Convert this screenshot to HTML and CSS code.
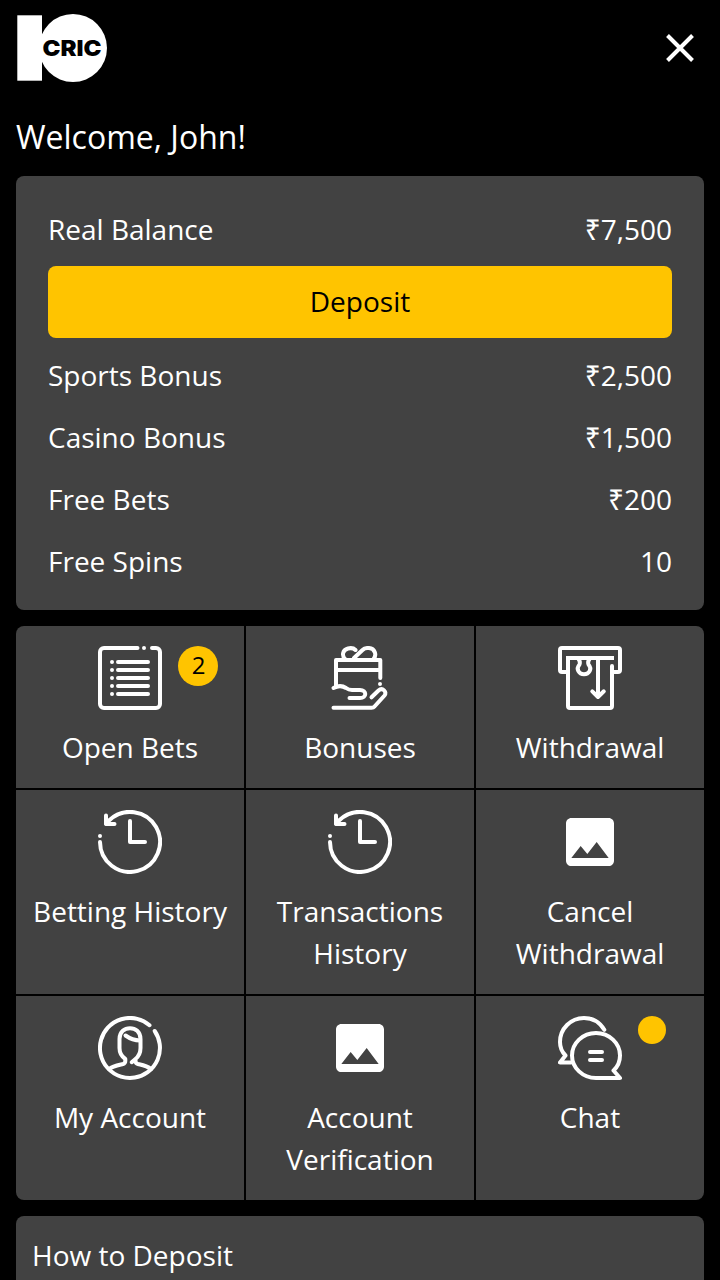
FILE: index.html
```html
<!DOCTYPE html>
<html lang="en">
<head>
    <meta charset="UTF-8">
    <meta name="viewport" content="width=device-width, initial-scale=1.0">
    <title>My Account</title>
    <link rel="stylesheet" href="styles.css">
</head>
<body>
    <!-- shared icons -->
    <svg class="sprite" width="0" height="0">
        <symbol id="icon-history" viewBox="0 0 64 64">
            <path d="M2 32A30 30 0 1 0 11 10.5L8 14M8 5.5V14H16.5M32 11V32H47"/>
            <path d="M2 26V26"/>
        </symbol>
        <symbol id="icon-image" viewBox="0 0 24 24">
            <path class="solid" d="M21 19V5c0-1.1-.9-2-2-2H5c-1.1 0-2 .9-2 2v14c0 1.1.9 2 2 2h14c1.1 0 2-.9 2-2zM8.5 13.5l2.5 3.01L14.5 12l4.5 6H5l3.5-4.5z"/>
        </symbol>
    </svg>

    <header class="header">
        <a href="#" class="logo">
            <svg width="92" height="70" viewBox="0 0 92 70">
                <rect x="1.3" y="2.3" width="24.7" height="65.4" fill="#fff"/>
                <circle cx="57" cy="35" r="34" fill="#fff"/>
                <text x="26.5" y="43" textLength="59" lengthAdjust="spacingAndGlyphs">CRIC</text>
            </svg>
        </a>
        <button class="close" aria-label="Close">
            <svg width="32" height="32" viewBox="0 0 32 32"><path d="M3.500 3.500L28.500 28.500M28.500 3.500L3.500 28.500"/></svg>
        </button>
    </header>

    <h1 class="welcome">Welcome, John!</h1>

    <section class="card balance">
        <div class="row"><span>Real Balance</span><span>₹7,500</span></div>
        <button class="deposit">Deposit</button>
        <div class="row"><span>Sports Bonus</span><span>₹2,500</span></div>
        <div class="row"><span>Casino Bonus</span><span>₹1,500</span></div>
        <div class="row"><span>Free Bets</span><span>₹200</span></div>
        <div class="row"><span>Free Spins</span><span>10</span></div>
    </section>

    <nav class="menu">
        <a href="#" class="tile">
            <svg class="icon" viewBox="0 0 64 64">
                <path d="M39.5 2H6a4 4 0 0 0-4 4V58a4 4 0 0 0 4 4H58a4 4 0 0 0 4-4V6a4 4 0 0 0-4-4H54M46 2V2"/>
                <path d="M14 16V16M20 16H50M14 24V24M20 24H50M14 32V32M20 32H50M14 40V40M20 40H50M14 48V48M20 48H50"/>
            </svg>
            <span>Open Bets</span>
            <span class="badge">2</span>
        </a>
        <a href="#" class="tile">
            <svg class="icon" viewBox="0 0 64 64">
                <path d="M8 40V14H52.3V32M8 24H52M52 38V38"/>
                <path d="M27.5 4C25 1.500 22 2 20 2.500C14 4 14 10 17 13M26 12L34.500 4C37 1.500 39 2 41 2C47 2.500 49 9 45.500 13"/>
                <path d="M5.500 42C10 39.500 15 40 18 42C20 43.500 21.500 44 24 44H32C39 44 39 52 32 52H21.500"/>
                <path d="M43.500 51.300L50.500 44.500C54.500 41 59.500 46 56.500 49.500L46.500 60.500Q45.500 61.800 43.500 61.800H5.500"/>
            </svg>
            <span>Bonuses</span>
        </a>
        <a href="#" class="tile">
            <svg class="icon" viewBox="0 0 64 64">
                <path d="M10 26H4a2 2 0 0 1-2-2V4a2 2 0 0 1 2-2H60a2 2 0 0 1 2 2V24a2 2 0 0 1-2 2H54"/>
                <path class="square" d="M8 12H56"/>
                <path d="M10 12V60a2 2 0 0 0 2 2H52a2 2 0 0 0 2-2V20M40 13V51M34.300 45.300L40 51L45.800 45.300"/>
                <path d="M20.500 13C22 15 22.500 16 21.500 18.500C17.500 23 21 28.300 26 28.300S34.500 23 30.500 18.500C29.500 16 30 15 31.500 13"/>
            </svg>
            <span>Withdrawal</span>
        </a>
        <a href="#" class="tile">
            <svg class="icon"><use href="#icon-history"/></svg>
            <span>Betting History</span>
        </a>
        <a href="#" class="tile">
            <svg class="icon"><use href="#icon-history"/></svg>
            <span>Transactions History</span>
        </a>
        <a href="#" class="tile">
            <svg class="icon"><use href="#icon-image"/></svg>
            <span>Cancel Withdrawal</span>
        </a>
        <a href="#" class="tile">
            <svg class="icon" viewBox="0 0 64 64">
                <path d="M51.500 9.200A30 30 0 1 0 56.700 15"/>
                <path d="M11 53C15 50 21 49 25 48Q27.300 47.300 27.300 45V43C23 40 21.500 36 21.500 32V23C21.500 8.500 42.500 8.500 42.500 23V32C42.500 36 41 40 37.500 43L33.700 46.200M37.500 43V45Q37.500 47.300 40 48C44 49 49 50 53 53"/>
                <path d="M27.500 19.500C31 22 36 24.500 42 24.500"/>
            </svg>
            <span>My Account</span>
        </a>
        <a href="#" class="tile">
            <svg class="icon"><use href="#icon-image"/></svg>
            <span>Account Verification</span>
        </a>
        <a href="#" class="tile">
            <svg class="icon" viewBox="0 0 64 64">
                <path d="M46.300 13.800C42 6.500 35 2 26 2A24 24 0 0 0 2 26C2 31 4 36 7.500 39.500L2 46.500H13"/>
                <path d="M38 62A24 22.500 0 1 1 62 39.500C62 45 60 50.500 55.500 54.500L62 62Z"/>
                <path d="M32 36H44M32 44H44"/>
            </svg>
            <span>Chat</span>
            <span class="badge dot"></span>
        </a>
    </nav>

    <a href="#" class="card link">How to Deposit</a>
</body>
</html>
```

FILE: styles.css
```css
* { box-sizing: border-box; }
body {
  margin: 0;
  padding: 0 16px;
  height: 1280px;
  overflow: hidden;
  background-color: #000;
  color: #fff;
  font: 28px/42px "Open Sans", "Noto Sans", sans-serif;
}
a { color: inherit; text-decoration: none; }
button { border: none; font: inherit; cursor: pointer; }
svg { display: block; }
.sprite { position: absolute; }

.header { display: flex; justify-content: space-between; align-items: center; height: 96px; }
.logo text { font: 900 22px Inter, sans-serif; fill: #000; }
.close { margin-right: 8px; padding: 0; background: none; }
.close path { stroke: #fff; stroke-width: 4; }

.welcome { margin: 17px 0 15px; font-size: 32px; font-weight: 400; line-height: 48px; }

.card { background-color: #424242; border-radius: 8px; }
.balance { padding: 32px 32px 28px; }
.row { display: flex; justify-content: space-between; }
.row + .row { margin-top: 20px; }
.deposit { display: block; width: 100%; height: 72px; margin: 16px 0; padding: 0 0 2px; border-radius: 8px; background-color: #ffc400; color: #000; }

.menu {
  display: grid;
  grid-template-columns: repeat(3, 1fr);
  gap: 2px;
  margin: 16px 0;
  border-radius: 8px;
  overflow: hidden;
}
.tile {
  position: relative;
  display: flex;
  flex-direction: column;
  align-items: center;
  gap: 16px;
  padding: 20px 16px;
  background-color: #424242;
  text-align: center;
}
.icon { width: 64px; height: 64px; fill: none; stroke: #fff; stroke-width: 4; stroke-linecap: round; stroke-linejoin: round; }
.solid { fill: #fff; stroke: none; }
.square { stroke-linecap: butt; }
.badge {
  position: absolute;
  top: 20px;
  left: 162px;
  width: 40px;
  height: 40px;
  padding-left: 1px;
  border-radius: 50%;
  background-color: #ffc400;
  color: #000;
  font-size: 24px;
  line-height: 38px;
}
.dot { width: 28px; height: 28px; }

.link { display: block; padding: 18px 16px; }
```
